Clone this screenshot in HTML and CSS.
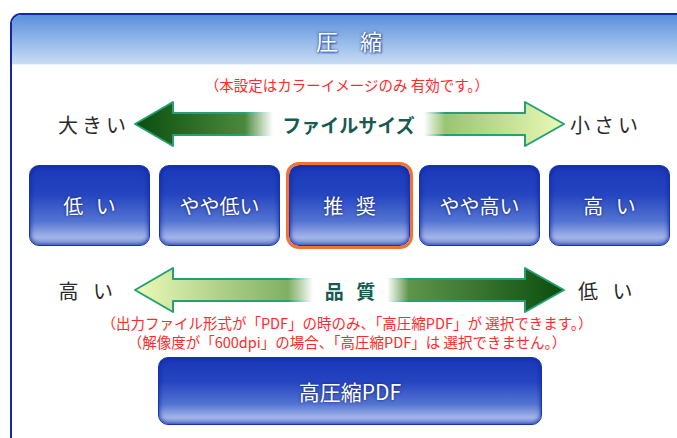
FILE: index.html
```html
<!DOCTYPE html>
<html lang="ja">
<head>
  <meta charset="UTF-8" />
  <title>圧縮</title>
  <link rel="stylesheet" href="styles.css">
</head>
<body>
  <div class="panel">
    <header class="panel-head"><h1>圧　縮</h1></header>

    <div class="panel-body">
      <p class="note">（本設定はカラーイメージのみ 有効です。）</p>

      <!-- ファイルサイズ -->
      <div class="scale scale-size">
        <span class="end end-left">大きい</span>
        <svg class="arrow" width="140" height="48" viewBox="0 0 140 48">
          <defs>
            <linearGradient id="g1" x1="0" x2="1"><stop offset="0" stop-color="#0a4d0e"/><stop offset="1" stop-color="#5c9848"/></linearGradient>
            <linearGradient id="f1" x1="0" x2="1"><stop offset="0.8" stop-color="#fff"/><stop offset="1" stop-color="#fff" stop-opacity="0"/></linearGradient>
            <mask id="m1"><rect width="140" height="48" fill="url(#f1)"/></mask>
          </defs>
          <path d="M2 24 L40 2 L40 13 L140 13 L140 35 L40 35 L40 46 Z" fill="url(#g1)" stroke="#24a074" stroke-width="2" stroke-linejoin="round" mask="url(#m1)"/>
        </svg>
        <span class="mid mid-size">ファイルサイズ</span>
        <svg class="arrow" width="142" height="48" viewBox="0 0 142 48">
          <defs>
            <linearGradient id="g2" x1="0" x2="1"><stop offset="0" stop-color="#8cba66"/><stop offset="1" stop-color="#eafab6"/></linearGradient>
            <linearGradient id="f2" x1="0" x2="1"><stop offset="0" stop-color="#fff" stop-opacity="0"/><stop offset="0.15" stop-color="#fff"/></linearGradient>
            <mask id="m2"><rect width="142" height="48" fill="url(#f2)"/></mask>
          </defs>
          <path d="M0 13 L101 13 L101 2 L140 24 L101 46 L101 35 L0 35 Z" fill="url(#g2)" stroke="#24a074" stroke-width="2" stroke-linejoin="round" mask="url(#m2)"/>
        </svg>
        <span class="end end-right">小さい</span>
      </div>

      <div class="levels">
        <button class="level spaced">低 い</button>
        <button class="level">やや低い</button>
        <button class="level spaced selected">推 奨</button>
        <button class="level">やや高い</button>
        <button class="level spaced">高 い</button>
      </div>

      <!-- 品質 -->
      <div class="scale scale-quality">
        <span class="end end-left">高 い</span>
        <svg class="arrow" width="180" height="46" viewBox="0 0 180 46">
          <defs>
            <linearGradient id="g3" x1="0" x2="1"><stop offset="0" stop-color="#ecfab8"/><stop offset="1" stop-color="#6ea356"/></linearGradient>
            <linearGradient id="f3" x1="0" x2="1"><stop offset="0.86" stop-color="#fff"/><stop offset="1" stop-color="#fff" stop-opacity="0"/></linearGradient>
            <mask id="m3"><rect width="180" height="46" fill="url(#f3)"/></mask>
          </defs>
          <path d="M2 23 L40 1 L40 12 L180 12 L180 34 L40 34 L40 45 Z" fill="url(#g3)" stroke="#24a074" stroke-width="2" stroke-linejoin="round" mask="url(#m3)"/>
        </svg>
        <span class="mid mid-quality">品 質</span>
        <svg class="arrow" width="179" height="46" viewBox="0 0 179 46">
          <defs>
            <linearGradient id="g4" x1="0" x2="1"><stop offset="0" stop-color="#6c9e54"/><stop offset="1" stop-color="#0a4d0e"/></linearGradient>
            <linearGradient id="f4" x1="0" x2="1"><stop offset="0" stop-color="#fff" stop-opacity="0"/><stop offset="0.12" stop-color="#fff"/></linearGradient>
            <mask id="m4"><rect width="179" height="46" fill="url(#f4)"/></mask>
          </defs>
          <path d="M0 12 L138 12 L138 1 L177 23 L138 45 L138 34 L0 34 Z" fill="url(#g4)" stroke="#24a074" stroke-width="2" stroke-linejoin="round" mask="url(#m4)"/>
        </svg>
        <span class="end end-right2">低 い</span>
      </div>

      <p class="note note-tight">（出力ファイル形式が「PDF」の時のみ、「高圧縮PDF」が 選択できます。）</p>
      <p class="note note-tight">（解像度が「600dpi」の場合、「高圧縮PDF」は 選択できません。）</p>

      <button class="level wide">高圧縮PDF</button>
    </div>
  </div>
</body>
</html>
```

FILE: styles.css
```css
body {
  margin:0;
  background:#fff;
  font-family:"Noto Sans CJK JP", "Noto Sans", sans-serif;
  overflow:hidden;
}
.panel {
  margin:13px 0 0 10px;
  width:720px;
  height:440px;
  border:2px solid #1428a0;
  border-bottom:none;
  border-radius:11px 11px 0 0;
  overflow:hidden;
  background:#fff;
}
.panel-head {
  height:49px;
  background:linear-gradient(to bottom, #5a8fdc, #c8ddf4);
  border-bottom:1px solid #eef4fc;
  display:flex;
  align-items:center;
  width:670px;
  justify-content:center;
}
.panel-head h1 {
  margin:0;
  font-size:22px;
  font-weight:normal;
  color:#fff;
  text-shadow:0 0 3px #2a4a9a, 1px 1px 2px #30509e;
  padding-left:4px;
}
.panel-body {
  width:670px;
  padding-top:10px;
}
.note {
  margin:0;
  text-align:center;
  color:#ff2a2a;
  font-size:14.5px;
  line-height:20px;
}
.note-tight {
  line-height:19px;
}

/* scales */
.scale {
  display:flex;
  align-items:center;
}
.scale-size {
  height:48px;
  margin-top:5px;
}
.scale-quality {
  height:46px;
  margin-top:21px;
}
.end {
  font-size:20px;
  color:#2a2a2a;
  letter-spacing:4px;
}
.end-left {
  width:118px;
  text-align:right;
  flex:none;
}
.scale-quality .end-left {
  width:106px;
  padding-right:12px;
  letter-spacing:5px;
}
.end-right { margin-left:4px; }
.end-right2 { margin-left:12px; letter-spacing:5px; }
.arrow {
  flex:none;
  display:block;
}
.scale .arrow:first-of-type { margin-left:3px; }
.mid {
  flex:none;
  text-align:center;
  font-size:19px;
  color:#175a52;
  font-weight:bold;
}
.mid-size { width:151px; }
.mid-quality { width:74px; letter-spacing:4px; padding-left:4px; box-sizing:border-box; }

/* level buttons */
.levels {
  display:flex;
  gap:9px;
  padding-left:17px;
  margin-top:17px;
}
.level {
  width:121px;
  height:81px;
  border:1px solid #1834b4;
  border-radius:10px;
  background:linear-gradient(to bottom, #1a38b8 0%, #2444c0 35%, #5474d2 70%, #a2b4e8 90%, #8098dc 100%);
  box-shadow:inset 0 0 5px #0c249e;
  color:#fff;
  font-family:"Noto Sans CJK JP", "Noto Sans", sans-serif;
  font-size:20px;
  text-shadow:0 0 3px rgba(10,20,80,0.8);
  padding:0;
  cursor:pointer;
}
.level.spaced {
  letter-spacing:4px;
  padding-left:4px;
}
.level.selected {
  outline:3px solid #f27232;
  outline-offset:0;
  border-radius:10px;
}
.wide {
  display:block;
  width:384px;
  height:68px;
  margin:6px 0 0 146px;
  font-size:21px;
}
```
